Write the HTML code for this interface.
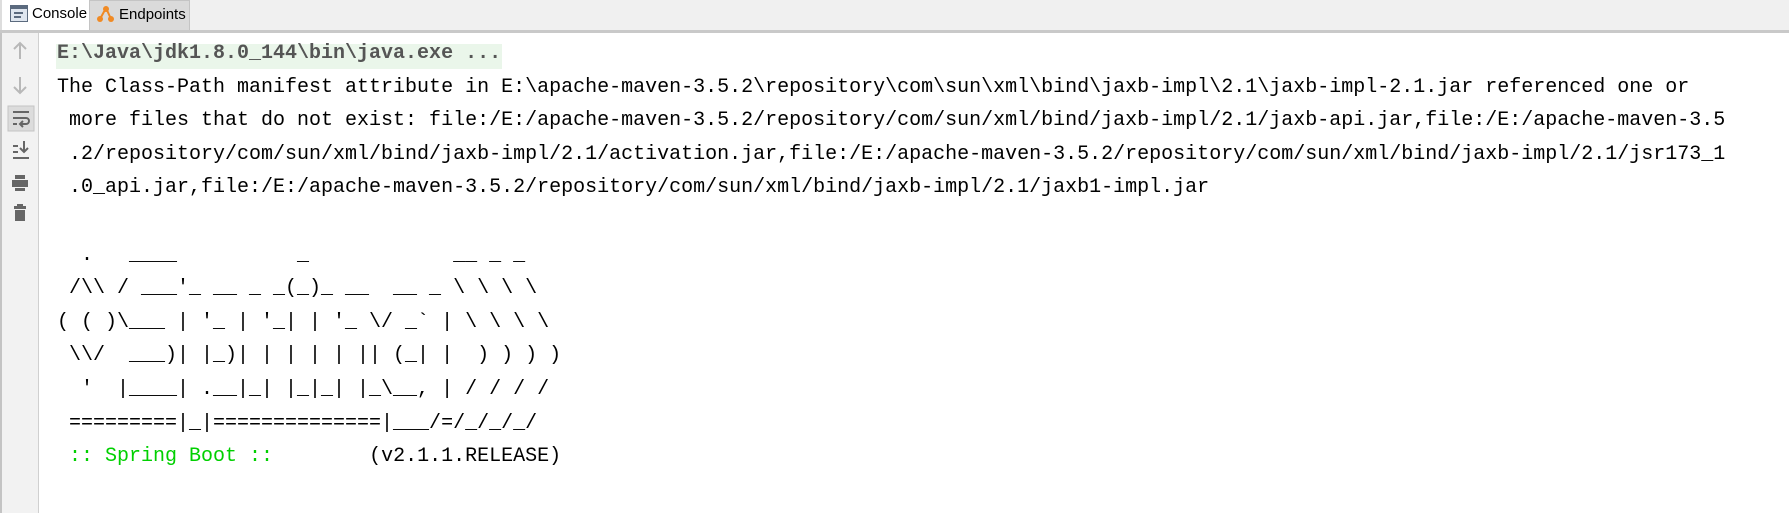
<!DOCTYPE html>
<html><head><meta charset="utf-8"><style>
*{margin:0;padding:0;box-sizing:border-box}
body{width:1789px;height:513px;background:#fff;overflow:hidden;position:relative;font-family:"Liberation Sans",sans-serif}
.top{position:absolute;left:0;top:0;width:1789px;height:33px;background:#f0f0f0;border-bottom:3px solid #c9c9c9}
.tab1{position:absolute;left:0;top:0;width:89px;height:30px;background:#fff;border-left:2px solid #ddd}
.tab2{position:absolute;left:89px;top:0;width:101px;height:30px;background:#dadada;border:1px solid #c4c4c4;border-bottom:none}
.tl{position:absolute;top:5px;font-size:15px;color:#000}
.gut{position:absolute;left:0;top:33px;width:39px;height:480px;background:#f2f2f2;border-left:2px solid #c4c4c4;border-right:1px solid #d0d0d0}
.out{position:absolute;left:57px;top:37px;font-family:"Liberation Mono",monospace;font-size:20px;line-height:33.6px;white-space:pre;color:#000}
.hl{position:absolute;left:56px;top:44px;width:446px;height:25px;background:#eaf6ea}
.g{color:#00d000}
.c1{color:#555;font-weight:bold}
</style></head><body>
<div class="top">
 <div class="tab1"><svg style="position:absolute;left:8px;top:5px" width="18" height="17"><rect x="0.5" y="0.5" width="17" height="16" fill="#dfe6ef" stroke="#5b6a7e"/><rect x="1" y="1" width="16" height="3" fill="#5b6a7e"/><rect x="4" y="7" width="9" height="2" fill="#5b6a7e"/><rect x="4" y="11" width="7" height="2" fill="#5b6a7e"/></svg><span class="tl" style="left:30px">Console</span></div>
 <div class="tab2"><svg style="position:absolute;left:6px;top:4px" width="20" height="18"><path d="M4 14 L10 3 L15 14" stroke="#f08a24" stroke-width="2" fill="none"/><circle cx="4" cy="14" r="3" fill="#f08a24"/><circle cx="10" cy="4" r="3" fill="#f08a24"/><circle cx="15" cy="14" r="3" fill="#f08a24"/></svg><span class="tl" style="left:29px">Endpoints</span></div>
</div>
<div class="gut">
 <svg width="37" height="480" style="position:absolute;left:0;top:0">
  <g stroke="#b8b8b8" stroke-width="2" fill="none"><path d="M18 10v16M12 16l6-6 6 6"/><path d="M18 44v16M12 54l6 6 6-6"/></g>
  <rect x="6" y="73" width="26" height="25" fill="#dcdcdc" stroke="#c4c4c4"/>
  <g stroke="#666" stroke-width="2" fill="none"><path d="M11 79h16M11 85h13a3 3 0 0 1 0 6h-5M11 91h4"/><path d="M21 88l-3 3 3 3"/></g>
  <g stroke="#666" stroke-width="2" fill="none"><path d="M11 113h5M11 119h5M11 125h16M22 108v11M18 115l4 4 4-4"/></g>
  <g fill="#666"><rect x="13" y="142" width="10" height="4"/><rect x="10" y="147" width="16" height="7"/><rect x="13" y="155" width="10" height="3"/></g>
  <g fill="#666"><rect x="12" y="173" width="12" height="3"/><rect x="15" y="171" width="6" height="2"/><rect x="13" y="177" width="10" height="11"/></g>
 </svg>
</div>
<div class="hl"></div>
<div class="out"><span class="c1">E:\Java\jdk1.8.0_144\bin\java.exe ...</span>
The Class-Path manifest attribute in E:\apache-maven-3.5.2\repository\com\sun\xml\bind\jaxb-impl\2.1\jaxb-impl-2.1.jar referenced one or
 more files that do not exist: file:/E:/apache-maven-3.5.2/repository/com/sun/xml/bind/jaxb-impl/2.1/jaxb-api.jar,file:/E:/apache-maven-3.5
 .2/repository/com/sun/xml/bind/jaxb-impl/2.1/activation.jar,file:/E:/apache-maven-3.5.2/repository/com/sun/xml/bind/jaxb-impl/2.1/jsr173_1
 .0_api.jar,file:/E:/apache-maven-3.5.2/repository/com/sun/xml/bind/jaxb-impl/2.1/jaxb1-impl.jar

  .   ____          _            __ _ _
 /\\ / ___'_ __ _ _(_)_ __  __ _ \ \ \ \
( ( )\___ | '_ | '_| | '_ \/ _` | \ \ \ \
 \\/  ___)| |_)| | | | | || (_| |  ) ) ) )
  '  |____| .__|_| |_|_| |_\__, | / / / /
 =========|_|==============|___/=/_/_/_/
 <span class="g">:: Spring Boot ::</span>        (v2.1.1.RELEASE)
</div>
</body></html>
